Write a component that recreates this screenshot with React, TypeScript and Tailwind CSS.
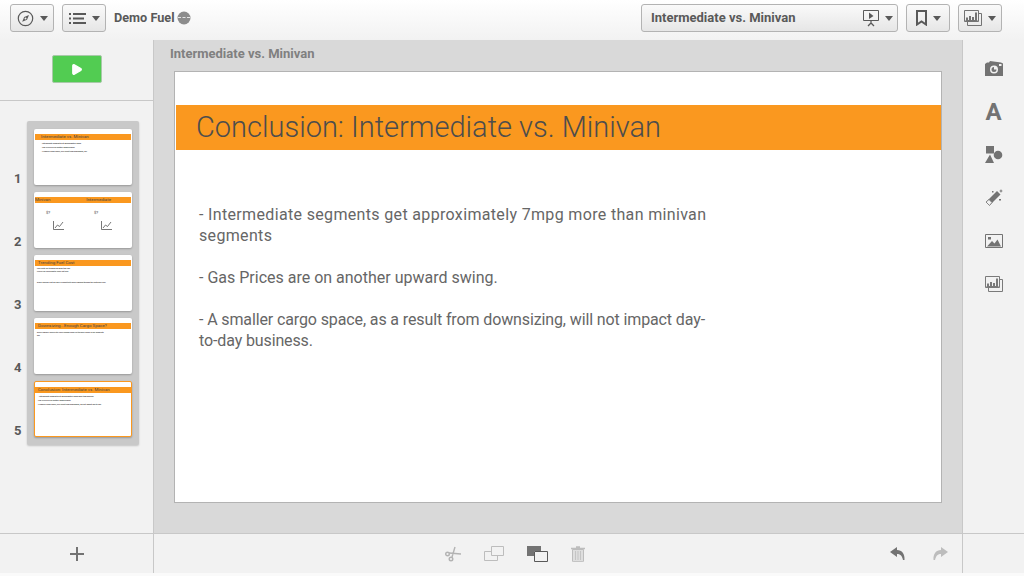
import { Play } from "lucide-react";

function Caret() {
  return <span className="h-0 w-0 border-x-[4px] border-t-[5px] border-x-transparent border-t-[#595959]" />;
}

function ToolButton({ icon, width }: { icon: React.ReactNode; width: string }) {
  return (
    <button className={`flex h-[28px] ${width} items-center justify-center gap-[6px] rounded-[3px] border border-[#b3b3b3] bg-gradient-to-b from-[#fafafa] to-[#e6e6e6]`}>
      {icon}
      <Caret />
    </button>
  );
}

function SlideshowIcon() {
  return (
    <svg width="18" height="18" viewBox="0 0 18 18" fill="none" stroke="#595959">
      <path d="M1.500 1.500h15v10h-15z" />
      <path d="M7 3.500l4.500 3.500L7 10z" fill="#595959" stroke="none" />
      <path d="M9 12v2M6 17l3-3 3 3" strokeWidth="1.3" />
    </svg>
  );
}

function ChartsIcon({ stroke = "#737373" }: { stroke?: string }) {
  return (
    <svg width="18" height="16" viewBox="0 0 18 16" fill="none" stroke={stroke}>
      <path d="M.5 .5h14v11h-14z" fill="#f2f2f2" />
      <path d="M14.500 3.500h3v12h-14v-4" />
      <path d="M3 10V7.500M6 10V6M9 10V7M12 10V2.500" strokeWidth="2" />
      <path d="M1.500 10.500h12" />
    </svg>
  );
}

function Thumb({ title, titleX = "pl-[3px]", selected = false, children }: { title: React.ReactNode; titleX?: string; selected?: boolean; children?: React.ReactNode }) {
  return (
    <div className={`h-[56px] w-[98px] overflow-hidden rounded-[2px] bg-white pt-[5px] shadow-[0_1px_2px_rgba(0,0,0,0.25)] ${selected ? "border border-[#fa981f]" : "px-px"}`}>
      <div className={`flex h-[6px] items-center whitespace-nowrap bg-[#fa981f] text-[4.4px] leading-[6px] text-[#444] ${titleX}`}>{title}</div>
      {children}
    </div>
  );
}

function ThumbLine({ children, className = "pl-[6px]" }: { children: string; className?: string }) {
  return <p className={`whitespace-nowrap text-[1.8px] font-bold leading-[4px] text-[#333] ${className}`}>{children}</p>;
}

function MiniChart() {
  return (
    <div className="flex w-[17px] flex-col">
      <span className="h-[10px] text-[4px] leading-[4px] text-[#444]">$?</span>
      <svg width="11" height="9" viewBox="0 0 11 9" fill="none" stroke="#555" strokeWidth="0.8" className="ml-[7px]">
        <path d="M.5 0v8.500h10.500" />
        <path d="M2 7l2.500-3 2 1.500L10 1" />
      </svg>
    </div>
  );
}

const thumbs = [
  <Thumb key="1" titleX="pl-[6px]" title="Intermediate vs. Minivan">
    <div className="pt-px">
      <ThumbLine>- Intermediate segments get approximately 7mpg</ThumbLine>
      <ThumbLine>- Gas Prices are on another upward swing.</ThumbLine>
      <ThumbLine>- A smaller cargo space, as a result from downsizing, will</ThumbLine>
    </div>
  </Thumb>,
  <Thumb key="2" titleX="justify-between pr-[20px]" title={<><span>Minivan</span><span>Intermediate</span></>}>
    <div className="flex gap-[31px] pl-[11px] pt-[8px]">
      <MiniChart />
      <MiniChart />
    </div>
  </Thumb>,
  <Thumb key="3" title="Trending Fuel Cost">
    <div className="pt-[1px]">
      <p className="whitespace-nowrap pl-[2px] text-[1.8px] font-bold leading-[2.500px] text-[#333]">Fuel costs are trending up again this year<br />Prices rise each quarter since last year</p>
      <p className="whitespace-nowrap pl-[2px] pt-[9px] text-[1.8px] font-bold leading-[3px] text-[#333]">Diesel and gas cost per mile is expected to keep climbing through the next fiscal year</p>
    </div>
  </Thumb>,
  <Thumb key="4" title="Downsizing...Enough Cargo Space?">
    <div className="pt-[2px]">
      <p className="whitespace-nowrap pl-[2px] text-[1.8px] font-bold leading-[3px] text-[#333]">Does a smaller vehicle still carry enough cargo for the daily needs of our segments<br />day</p>
    </div>
  </Thumb>,
  <Thumb key="5" selected title="Conclusion: Intermediate vs. Minivan">
    <div className="pt-[1px]">
      <ThumbLine className="pl-[3px]">- Intermediate segments get approximately 7mpg more than minivan</ThumbLine>
      <ThumbLine className="pl-[2px]">- Gas Prices are on another upward swing.</ThumbLine>
      <ThumbLine className="pl-[2px]">- A smaller cargo space, as a result from downsizing, will not impact day-to-day</ThumbLine>
    </div>
  </Thumb>,
];

function SideIcon({ children }: { children: React.ReactNode }) {
  return <div className="flex h-[22px] w-[20px] items-center justify-center">{children}</div>;
}

export default function App() {
  return (
    <div className="flex h-[576px] w-[1024px] flex-col overflow-hidden bg-[#f2f2f2] font-['Roboto',sans-serif]">
      <header className="flex h-[40px] shrink-0 items-start justify-between bg-gradient-to-b from-white to-[#f2f2f2] pl-[10px] pr-[22px] pt-[4px]">
        <div className="flex items-center gap-[8px]">
          <ToolButton
            width="w-[44px]"
            icon={
              <svg width="17" height="17" viewBox="0 0 17 17" fill="none" stroke="#595959">
                <circle cx="8.500" cy="8.500" r="7.200" strokeWidth="1.2" />
                <path d="M12 5l-2 4.800-4.800 2 2-4.800z" fill="#595959" stroke="none" />
                <circle cx="8.500" cy="8.500" r="1" fill="#f2f2f2" stroke="none" />
              </svg>
            }
          />
          <ToolButton
            width="w-[44px]"
            icon={
              <svg width="17" height="11" viewBox="0 0 17 11" fill="#595959">
                <path d="M0 0h2v2H0zM4 0h13v2H4zM0 4.500h2v2H0zM4 4.500h11v2H4zM0 9h2v2H0zM4 9h13v2H4z" />
              </svg>
            }
          />
          <div className="flex items-center gap-[2px]">
            <span className="text-[12.700px] font-bold text-[#595959]">Demo Fuel</span>
            <svg width="14" height="14" viewBox="0 0 14 14">
              <circle cx="7" cy="7" r="6.500" fill="#8c8c8c" />
              <path d="M1 6.500h3M5.500 6.500h3M10 6.500h3" stroke="#e6e6e6" />
            </svg>
          </div>
        </div>
        <div className="flex items-center gap-[8px]">
          <button className="flex h-[28px] w-[257px] items-center justify-between rounded-[3px] border border-[#b3b3b3] bg-gradient-to-b from-[#fafafa] to-[#e6e6e6] pl-[9px] pr-[4px]">
            <span className="text-[13px] font-bold text-[#595959]">Intermediate vs. Minivan</span>
            <span className="flex items-center gap-[5px]">
              <SlideshowIcon />
              <Caret />
            </span>
          </button>
          <ToolButton
            width="w-[44px]"
            icon={
              <svg width="11" height="16" viewBox="0 0 11 16" fill="none" stroke="#595959" strokeWidth="2">
                <path d="M1 1h9v13.500l-4.500-3-4.500 3z" />
              </svg>
            }
          />
          <ToolButton width="w-[44px]" icon={<ChartsIcon />} />
        </div>
      </header>

      <div className="flex min-h-0 flex-1">
        <aside className="flex w-[154px] shrink-0 flex-col border-r border-[#c8c8c8]">
          <div className="flex h-[61px] shrink-0 items-start justify-center border-b border-[#c8c8c8] pt-[15px]">
            <button className="flex h-[28px] w-[50px] items-center justify-center rounded-[2px] border border-[#a9c9a9] bg-[#52cc52]">
              <Play size={13} fill="white" stroke="white" />
            </button>
          </div>
          <div className="flex pl-[14px] pt-[20px]">
            <div className="flex w-[13px] flex-col pt-[3px]">
              {[1, 2, 3, 4, 5].map((n) => (
                <div key={n} className="flex h-[63px] items-end text-[13px] font-bold leading-[16px] text-[#595959]">
                  {n}
                </div>
              ))}
            </div>
            <div className="flex h-[324px] w-[112px] flex-col gap-[7px] rounded-[2px] bg-[#c9c9c9] px-[7px] pt-[8px] shadow-[0_1px_2px_rgba(0,0,0,0.2)]">
              {thumbs}
            </div>
          </div>
        </aside>

        <main className="flex min-w-0 flex-1 flex-col bg-[#d9d9d9]">
          <div className="h-[31px] shrink-0 pl-[16px] pt-[5px] text-[13px] font-bold leading-[18px] text-[#808080]">Intermediate vs. Minivan</div>
          <div className="pl-[20px]">
            <section className="h-[432px] w-[768px] border border-[#b3b3b3] bg-white pl-px pt-[33px]">
              <h1 className="flex h-[45px] items-center bg-[#fa981f] pl-[20px] text-[29px] font-light text-[#4d4d4d]">Conclusion: Intermediate vs. Minivan</h1>
              <div className="w-[540px] pl-[23px] pt-[54px] text-[16px] leading-[21px] text-[#666]">
                <p className="tracking-[0.34px]">- Intermediate segments get approximately 7mpg more than minivan segments</p>
                <p className="pt-[21px]">- Gas Prices are on another upward swing.</p>
                <p className="pt-[21px] tracking-[-0.12px]">- A smaller cargo space, as a result from downsizing, will not impact day-to-day business.</p>
              </div>
            </section>
          </div>
        </main>

        <aside className="flex w-[62px] shrink-0 flex-col items-center gap-[21px] border-l border-[#c8c8c8] pt-[18px]">
          <SideIcon>
            <svg width="18" height="16" viewBox="0 0 18 16">
              <path fillRule="evenodd" fill="#737373" d="M0 3l2-1.500h2L5 0l11 1.500 2 1V15H0zM9 4.500a4 4 0 100 8 4 4 0 000-8z" />
              <path d="M9 6a2.500 2.500 0 102.500 2.500H9z" fill="#737373" />
              <path d="M14 3h2.500v2H14z" fill="#f2f2f2" />
            </svg>
          </SideIcon>
          <SideIcon>
            <span className="text-[24px] font-bold leading-none text-[#737373]">A</span>
          </SideIcon>
          <SideIcon>
            <svg width="18" height="18" viewBox="0 0 18 18" fill="#737373">
              <path d="M1 0h8v7.500H1zM5 8.500l4 8.500H0z" />
              <circle cx="13" cy="9" r="4.300" />
            </svg>
          </SideIcon>
          <SideIcon>
            <svg width="19" height="18" viewBox="0 0 19 18">
              <path d="M13 2l3.500 3.500L5.500 16.500 2 13z" fill="#737373" />
              <path d="M5 10.500L8 13.500 5.500 16.500 2 13z" fill="#f2f2f2" stroke="#737373" strokeWidth="0.8" />
              <path d="M17 0l.6 1.400L19 2l-1.400.6L17 4l-.6-1.400L15 2l1.400-.6zM15 10h2v1.500h-2zM8 2h1.500v1.500H8z" fill="#737373" />
            </svg>
          </SideIcon>
          <SideIcon>
            <svg width="18" height="14" viewBox="0 0 18 14">
              <path d="M.5 .5h17v13H.5z" fill="none" stroke="#737373" />
              <path d="M3 3h3v2.500H3zM2 12.500l5-5.500 2.500 2.500 3-4 3.500 7z" fill="#737373" />
            </svg>
          </SideIcon>
          <SideIcon>
            <ChartsIcon stroke="#7a7a7a" />
          </SideIcon>
        </aside>
      </div>

      <footer className="flex h-[40px] shrink-0 border-t border-[#c8c8c8]">
        <div className="flex w-[154px] shrink-0 items-center justify-center border-r border-[#c8c8c8]">
          <svg width="14" height="14" viewBox="0 0 14 14" stroke="#737373" strokeWidth="2">
            <path d="M7 0v14M0 7h14" />
          </svg>
        </div>
        <div className="flex flex-1 items-center justify-between border-r border-[#c8c8c8] pl-[291px] pr-[14px]">
          <div className="flex items-center gap-[23px]">
            <svg width="16" height="16" viewBox="0 0 16 16" fill="none" stroke="#b3b3b3" strokeWidth="1.4">
              <circle cx="2.500" cy="8" r="1.800" />
              <circle cx="6" cy="13" r="1.800" />
              <path d="M4 7l12 1M7 11l3-10" />
            </svg>
            <svg width="20" height="16" viewBox="0 0 20 16" fill="none" stroke="#bdbdbd">
              <path d="M7.500 .5h12v9h-12zM7.500 5.500h-7v9h13v-5" />
            </svg>
            <svg width="21" height="16" viewBox="0 0 21 16">
              <path d="M0 0h14v5h-7v5H0z" fill="#737373" />
              <path d="M7.500 5.500h13v10h-13z" fill="#f2f2f2" stroke="#595959" />
            </svg>
            <svg width="14" height="16" viewBox="0 0 14 16" fill="none">
              <path d="M1.500 3.500h11V15a.7.7 0 01-.7.7H2.200a.7.7 0 01-.7-.7z" fill="#dedede" stroke="#bdbdbd" />
              <path d="M0 2.500h14M5 1h4" stroke="#bdbdbd" strokeWidth="1.6" />
              <path d="M4.500 5v9M7 5v9M9.500 5v9" stroke="#c4c4c4" />
            </svg>
          </div>
          <div className="flex items-center gap-[28px]">
            <svg width="15" height="14" viewBox="0 0 15 14" fill="#737373">
              <path d="M7 0L0 5l7 5V7c3 0 5 1.500 6 6h1.500C15 7 12 3 7 3z" />
            </svg>
            <svg width="15" height="14" viewBox="0 0 15 14" fill="#bdbdbd">
              <path d="M8 0l7 5-7 5V7c-3 0-5 1.500-6 6H.5C0 7 3 3 8 3z" />
            </svg>
          </div>
        </div>
        <div className="w-[61px] shrink-0" />
      </footer>
      <div className="h-[3px] shrink-0 bg-[#fafafa]" />
    </div>
  );
}
